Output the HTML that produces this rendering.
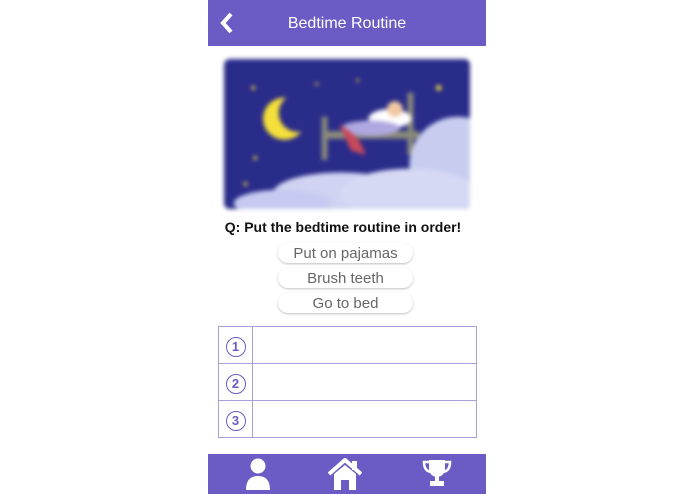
<!DOCTYPE html>
<html><head><style>
body{margin:0;width:695px;height:494px;background:#fff;position:relative;font-family:"Liberation Sans",sans-serif;overflow:hidden}
.hdr{position:absolute;left:208px;top:0;width:278px;height:46px;background:#6a5cc4;color:#fff;font-size:16px;text-align:center;line-height:47px}
.ftr{position:absolute;left:208px;top:454px;width:278px;height:40px;background:#6a5cc4}
.img{position:absolute;left:224px;top:59px;width:246px;height:150px;background:#2d2f8a;filter:blur(2px);overflow:hidden;border-radius:6px}
.q{position:absolute;left:204px;width:278px;top:219px;text-align:center;font-weight:bold;font-size:14px;color:#111}
.btn{position:absolute;left:278px;width:135px;height:20px;border-radius:10px;background:#fff;box-shadow:0 1px 2px rgba(0,0,0,.25);text-align:center;font-size:15px;color:#666;line-height:21px}
table{position:absolute;left:218px;top:326px;width:259px;border-collapse:collapse}
td{border:1px solid #a9a0d8;height:36px;padding:0}
.n{width:33px;text-align:center}
.c{display:inline-block;width:18px;height:18px;border:1.5px solid #6a5cc4;border-radius:50%;color:#6a5cc4;font-size:13px;font-weight:bold;line-height:18px;text-align:center;margin-top:3px}
</style></head><body>
<div class="hdr">Bedtime Routine
<svg style="position:absolute;left:12px;top:12px" width="14" height="22" viewBox="0 0 14 22"><path d="M11 2 L3 11 L11 20" stroke="#fff" stroke-width="4" fill="none"/></svg></div>
<div class="img">
<svg width="246" height="150" viewBox="0 0 252 156" preserveAspectRatio="none">
<rect width="252" height="156" fill="#2a2c8a"/>
<circle cx="62" cy="62" r="22" fill="#f5df3a"/><circle cx="76" cy="56" r="20" fill="#2a2c8a"/>
<g fill="#e8d040"><circle cx="30" cy="30" r="2"/><circle cx="95" cy="26" r="1.5"/><circle cx="137" cy="22" r="1.5"/><circle cx="220" cy="30" r="3"/><circle cx="32" cy="103" r="2"/><circle cx="22" cy="130" r="2"/></g>
<rect x="100" y="75" width="100" height="8" fill="#8a8a7a"/><rect x="100" y="60" width="6" height="45" fill="#8a8a7a"/><rect x="188" y="35" width="6" height="65" fill="#8a8a7a"/>
<ellipse cx="170" cy="62" rx="22" ry="10" fill="#fff"/><ellipse cx="150" cy="72" rx="30" ry="8" fill="#b0a8e0"/><path d="M118 68 Q140 80 145 100 L130 95 Z" fill="#c8485a"/>
<circle cx="175" cy="52" r="8" fill="#f0c8a0"/>
<ellipse cx="240" cy="110" rx="50" ry="50" fill="#c8cdf0"/><ellipse cx="120" cy="140" rx="70" ry="22" fill="#d0d4f2"/><ellipse cx="60" cy="150" rx="50" ry="14" fill="#c6caf0"/><ellipse cx="190" cy="140" rx="70" ry="26" fill="#d6d9f4"/>
</svg></div>
<div class="q">Q: Put the bedtime routine in order!</div>
<div class="btn" style="top:243px">Put on pajamas</div>
<div class="btn" style="top:268px">Brush teeth</div>
<div class="btn" style="top:293px">Go to bed</div>
<table>
<tr><td class="n"><span class="c">1</span></td><td></td></tr>
<tr><td class="n"><span class="c">2</span></td><td></td></tr>
<tr><td class="n" style="height:35px"><span class="c">3</span></td><td></td></tr>
</table>
<div class="ftr">
<svg style="position:absolute;left:37px;top:4px" width="26" height="32" viewBox="0 0 26 32"><circle cx="13" cy="8" r="7.5" fill="#fff"/><path d="M1 32 Q1 18 13 18 Q25 18 25 32 Z" fill="#fff"/></svg>
<svg style="position:absolute;left:120px;top:4px" width="34" height="32" viewBox="0 0 34 32"><path d="M1 16 L17 2 L33 16" stroke="#fff" stroke-width="4" fill="none"/><rect x="24" y="3" width="5" height="9" fill="#fff"/><path d="M6 16 L17 7 L28 16 V32 H21 V22 H13 V32 H6 Z" fill="#fff"/></svg>
<svg style="position:absolute;left:214px;top:5px" width="30" height="28" viewBox="0 0 30 28"><path d="M7 1 H23 V9 Q23 17 15 18 Q7 17 7 9 Z" fill="#fff"/><path d="M7 3 H2 Q2 12 9 13 M23 3 H28 Q28 12 21 13" stroke="#fff" stroke-width="2.5" fill="none"/><rect x="13" y="17" width="4" height="5" fill="#fff"/><rect x="8" y="22" width="14" height="5" fill="#fff"/></svg>
</div>
</body></html>
